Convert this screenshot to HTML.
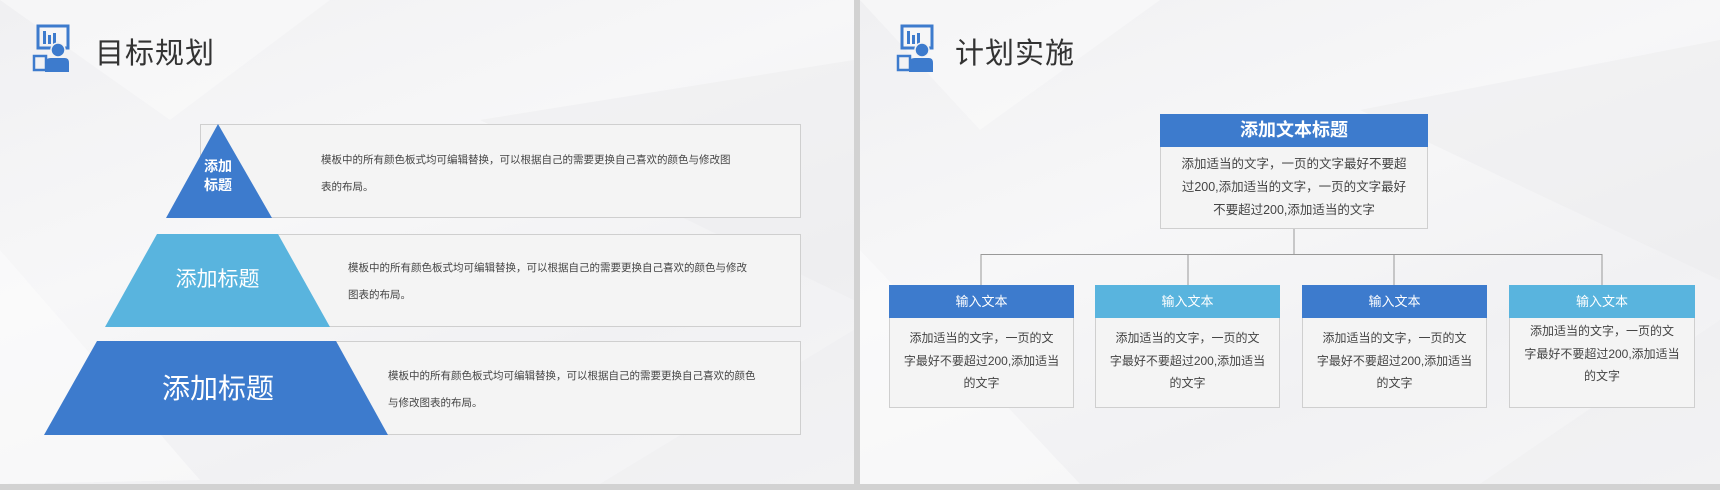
<!DOCTYPE html>
<html><head><meta charset="utf-8"><style>
*{margin:0;padding:0;box-sizing:border-box}
body{width:1720px;height:490px;background:#d2d2d2;position:relative;overflow:hidden;font-family:"Liberation Sans","Noto Sans CJK SC",sans-serif}
.slide{position:absolute;top:0;height:484px;background:linear-gradient(160deg,#f0f0f2 0%,#f7f7f8 40%,#f1f1f3 70%,#f6f6f7 100%);overflow:hidden}
.abs{position:absolute}
.title{position:absolute;top:30px;font-size:29px;color:#333;letter-spacing:1px}
.box{position:absolute;background:#f4f4f4;border:1px solid #cfcfcf}
.desc{position:absolute;font-size:10.5px;color:#444;line-height:27px}
.hdr{position:absolute;color:#fff;text-align:center}
.body{position:absolute;font-size:12px;color:#444;text-align:center;line-height:22.5px}
</style></head><body>
<div class="slide" style="left:0;width:854px">
<svg class="abs" style="left:0;top:0" width="854" height="484"><polygon points="0,0 330,0 170,120" fill="#fafafa" opacity=".6"/><polygon points="480,120 854,60 854,300" fill="#ececee" opacity=".5"/><polygon points="0,250 200,480 0,484" fill="#fbfbfb" opacity=".6"/><polygon points="600,484 854,330 854,484" fill="#ededef" opacity=".5"/></svg>
<svg class="abs" style="left:32px;top:24px" width="40" height="50" viewBox="32 24 40 50"><rect x="38" y="26" width="30" height="22" fill="none" stroke="#3d7bcd" stroke-width="3"/><rect x="43" y="31" width="3" height="13" fill="#3d7bcd"/><rect x="48" y="35" width="3" height="9" fill="#3d7bcd"/><rect x="53" y="33" width="3" height="11" fill="#3d7bcd"/><rect x="34" y="56" width="12" height="14" fill="none" stroke="#3d7bcd" stroke-width="2.5"/><circle cx="58" cy="50" r="7" fill="#3d7bcd" stroke="#f3f3f3" stroke-width="1.5"/><path d="M45 72 V63 Q45 58 51 58 H65 Q69 58 69 63 V72Z" fill="#3d7bcd"/></svg>
<div class="title" style="left:95px">目标规划</div>
<div class="box" style="left:200px;top:124px;width:601px;height:94px"></div>
<svg class="abs" style="left:0;top:0" width="854" height="484"><polygon points="218,124 272,218 166,218" fill="#3d7bcd"/></svg>
<div class="box" style="left:278px;top:234px;width:523px;height:93px;border-left:none"></div>
<div class="box" style="left:336px;top:341px;width:465px;height:94px;border-left:none"></div>
<svg class="abs" style="left:0;top:0" width="854" height="484"><polygon points="157,234 278,234 330,327 105,327" fill="#59b4de"/><polygon points="97,341 336,341 388,435 44,435" fill="#3d7bcd"/></svg>
<div class="abs" style="left:198px;top:157px;color:#fff;font-size:14px;font-weight:bold;line-height:19px;text-align:center;width:40px">添加<br>标题</div>
<div class="abs" style="left:157px;top:263px;color:#fff;font-size:21px;width:121px;text-align:center">添加标题</div>
<div class="abs" style="left:130px;top:367px;color:#fff;font-size:28px;width:176px;text-align:center">添加标题</div>
<div class="desc" style="left:321px;top:147px">模板中的所有颜色板式均可编辑替换，可以根据自己的需要更换自己喜欢的颜色与修改图<br>表的布局。</div>
<div class="desc" style="left:348px;top:255px">模板中的所有颜色板式均可编辑替换，可以根据自己的需要更换自己喜欢的颜色与修改<br>图表的布局。</div>
<div class="desc" style="left:388px;top:363px">模板中的所有颜色板式均可编辑替换，可以根据自己的需要更换自己喜欢的颜色<br>与修改图表的布局。</div>
</div>
<div class="slide" style="left:860px;width:860px">
<svg class="abs" style="left:0;top:0" width="860" height="484"><polygon points="0,0 300,0 120,130" fill="#fafafa" opacity=".6"/><polygon points="500,110 860,40 860,280" fill="#ececee" opacity=".5"/><polygon points="0,250 220,484 0,484" fill="#fbfbfb" opacity=".6"/><polygon points="620,484 860,320 860,484" fill="#ededef" opacity=".5"/></svg>
<svg class="abs" style="left:36px;top:24px" width="40" height="50" viewBox="32 24 40 50"><rect x="38" y="26" width="30" height="22" fill="none" stroke="#3d7bcd" stroke-width="3"/><rect x="43" y="31" width="3" height="13" fill="#3d7bcd"/><rect x="48" y="35" width="3" height="9" fill="#3d7bcd"/><rect x="53" y="33" width="3" height="11" fill="#3d7bcd"/><rect x="34" y="56" width="12" height="14" fill="none" stroke="#3d7bcd" stroke-width="2.5"/><circle cx="58" cy="50" r="7" fill="#3d7bcd" stroke="#f3f3f3" stroke-width="1.5"/><path d="M45 72 V63 Q45 58 51 58 H65 Q69 58 69 63 V72Z" fill="#3d7bcd"/></svg>
<div class="title" style="left:95px">计划实施</div>
<svg class="abs" style="left:0;top:0" width="860" height="484"><path d="M434 228V254M121 254.5H742M121 254V285M328 254V285M534 254V285M742 254V285" stroke="#999" stroke-width="1" fill="none"/></svg>
<div class="box" style="left:300px;top:114px;width:268px;height:115px"></div>
<div class="hdr" style="left:300px;top:114px;width:268px;height:33px;background:#3d7bcd;font-size:18px;font-weight:bold;line-height:33px">添加文本标题</div>
<div class="body" style="left:300px;top:153px;width:268px;font-size:12.5px;line-height:23px">添加适当的文字，一页的文字最好不要超<br>过200,添加适当的文字，一页的文字最好<br>不要超过200,添加适当的文字</div>
<div class="box" style="left:29px;top:285px;width:185px;height:123px"></div>
<div class="hdr" style="left:29px;top:285px;width:185px;height:33px;background:#3d7bcd;font-size:13px;line-height:33px">输入文本</div>
<div class="body" style="left:29px;top:327px;width:185px">添加适当的文字，一页的文<br>字最好不要超过200,添加适当<br>的文字</div>
<div class="box" style="left:235px;top:285px;width:185px;height:123px"></div>
<div class="hdr" style="left:235px;top:285px;width:185px;height:33px;background:#59b4de;font-size:13px;line-height:33px">输入文本</div>
<div class="body" style="left:235px;top:327px;width:185px">添加适当的文字，一页的文<br>字最好不要超过200,添加适当<br>的文字</div>
<div class="box" style="left:442px;top:285px;width:185px;height:123px"></div>
<div class="hdr" style="left:442px;top:285px;width:185px;height:33px;background:#3d7bcd;font-size:13px;line-height:33px">输入文本</div>
<div class="body" style="left:442px;top:327px;width:185px">添加适当的文字，一页的文<br>字最好不要超过200,添加适当<br>的文字</div>
<div class="box" style="left:649px;top:285px;width:186px;height:123px"></div>
<div class="hdr" style="left:649px;top:285px;width:186px;height:33px;background:#59b4de;font-size:13px;line-height:33px">输入文本</div>
<div class="body" style="left:649px;top:320px;width:186px">添加适当的文字，一页的文<br>字最好不要超过200,添加适当<br>的文字</div>
</div>
</body></html>
